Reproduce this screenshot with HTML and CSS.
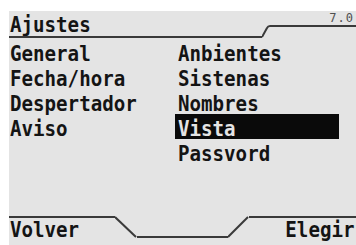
FILE: index.html
```html
<!DOCTYPE html>
<html lang="es">
    <head>
        <meta charset="UTF-8">
        <title>Ajustes</title>
        <link rel="stylesheet" href="styles.css">
    </head>
    <body>
        <div class="screen">
            <div class="header">
                <div class="title"><span class="label">Ajustes</span></div>
                <svg class="slant-up-small" width="8" height="13" viewBox="0 0 8 13">
                    <path d="M0 12 L5 3 Q6 1 8 1" fill="none" stroke="#3a3a3a" stroke-width="2"/>
                </svg>
                <div class="version">7.0</div>
            </div>

            <div class="menu">
                <div class="col">
                    <div class="item"><span class="label">General</span></div>
                    <div class="item"><span class="label">Fecha/hora</span></div>
                    <div class="item"><span class="label">Despertador</span></div>
                    <div class="item"><span class="label">Aviso</span></div>
                </div>
                <div class="col col-right">
                    <div class="item"><span class="label">Anbientes</span></div>
                    <div class="item"><span class="label">Sistenas</span></div>
                    <div class="item"><span class="label">Nombres</span></div>
                    <div class="item selected"><span class="label">Vista</span></div>
                    <div class="item"><span class="label">Passvord</span></div>
                </div>
            </div>

            <div class="softbar">
                <div class="soft-left"><span class="label">Volver</span></div>
                <svg class="slant" width="22" height="22" viewBox="0 0 22 22">
                    <path d="M0 1 L21 21" fill="none" stroke="#3a3a3a" stroke-width="2"/>
                </svg>
                <div class="soft-mid"></div>
                <svg class="slant" width="21" height="22" viewBox="0 0 21 22">
                    <path d="M0 21 L20 1" fill="none" stroke="#3a3a3a" stroke-width="2"/>
                </svg>
                <div class="soft-right"><span class="label">Elegir</span></div>
            </div>
        </div>
    </body>
</html>
```

FILE: styles.css
```css
body {
    margin: 0;
    background: #ffffff;
    overflow: hidden;
}

.screen {
    margin: 11px 0 0 9px;
    height: 245px;
    background: #e4e4e4;
    color: #141414;
    font-family: "DejaVu Sans Mono", monospace;
    font-weight: bold;
    font-size: 22px;
    display: flex;
    flex-direction: column;
}

/* the phone font is tall and narrow: squeeze the glyphs sideways */
.label {
    display: inline-block;
    white-space: nowrap;
    transform: scaleX(0.87);
    transform-origin: 0 0;
}

.header {
    display: flex;
    align-items: flex-start;
}

.title {
    flex: none;
    width: 253px;
    padding: 3px 0 0 1px;
    line-height: 22px;
    border-bottom: 2px solid #3a3a3a;
    box-sizing: border-box;
    height: 27px;
}

.slant-up-small {
    flex: none;
    margin-top: 14px;
}

.version {
    flex: 1;
    height: 14px;
    border-bottom: 2px solid #3a3a3a;
    text-align: right;
    padding-right: 2px;
    font-size: 12px;
    line-height: 14px;
    letter-spacing: 1px;
    color: #505050;
    font-weight: normal;
}

.menu {
    display: grid;
    grid-template-columns: 166px 164px;
    padding-top: 1px;
}

.item {
    height: 25px;
    box-sizing: border-box;
    padding: 5px 0 0 1px;
    line-height: 20px;
}

.col-right .item {
    padding-left: 3px;
}

.item.selected {
    background: #0a0a0a;
    color: #e4e4e4;
}

.softbar {
    display: flex;
    align-items: flex-start;
    margin-top: 52px;
}

.soft-left {
    flex: none;
    width: 106px;
    border-top: 2px solid #3a3a3a;
    padding-left: 1px;
    line-height: 24px;
    box-sizing: border-box;
}

.slant {
    flex: none;
}

.soft-mid {
    flex: none;
    width: 91px;
    height: 20px;
    border-bottom: 2px solid #3a3a3a;
}

.soft-right {
    flex: 1;
    border-top: 2px solid #3a3a3a;
    text-align: right;
    padding-right: 2px;
    line-height: 24px;
}

.soft-right .label {
    transform-origin: 100% 0;
}
```
